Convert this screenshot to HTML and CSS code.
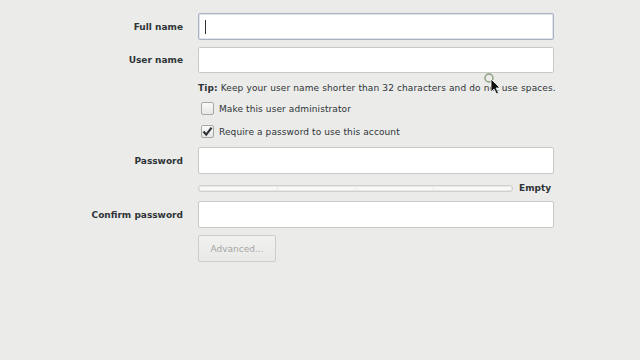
FILE: index.html
```html
<!DOCTYPE html>
<html>
<head>
<meta charset="utf-8">
<link rel="stylesheet" href="styles.css">
</head>
<body>
<div class="form">
  <div class="label r1">Full name</div>
  <div class="entry focused r1"><span class="caret"></span></div>

  <div class="label r2">User name</div>
  <div class="entry r2"></div>

  <div class="tip r3"><b>Tip:</b> Keep your user name shorter than 32 characters and do not use spaces.</div>

  <label class="check r4"><span class="box"></span>Make this user administrator</label>
  <label class="check r5"><span class="box checked"><svg width="11" height="11" viewBox="0 0 11 11"><path d="M1.5 5.5 L4.2 8.6 L9.6 1.6" fill="none" stroke="#2e3436" stroke-width="2.2" stroke-linejoin="miter"/></svg></span>Require a password to use this account</label>

  <div class="label r6">Password</div>
  <div class="entry r6"></div>

  <div class="strength r7">
    <div class="bar"><span></span><span></span><span></span><span></span></div>
    <span class="empty">Empty</span>
  </div>

  <div class="label r8">Confirm password</div>
  <div class="entry r8"></div>

  <div class="r9 btnrow"><button class="btn">Advanced...</button></div>
</div>

<svg class="pointer" width="24" height="24" viewBox="0 0 24 24">
  <circle cx="5" cy="5" r="4" fill="none" stroke="#6f8a5f" stroke-width="1.4" opacity="0.8"/>
  <path d="M7 6 L7 19 L10 16 L12.5 21 L14.5 20 L12 15 L16 15 Z" fill="#111" stroke="#fff" stroke-width="0.8"/>
</svg>
</body>
</html>
```

FILE: styles.css
```css
html, body {
  margin: 0;
  padding: 0;
  background: #ebebea;
  width: 640px;
  height: 360px;
  overflow: hidden;
  font-family: "DejaVu Sans", sans-serif;
  font-size: 9px;
  color: #2e3436;
}

.form {
  display: grid;
  grid-template-columns: 103px 356px;
  column-gap: 15px;
  margin-left: 80px;
  padding-top: 13px;
  align-items: center;
}

.label {
  grid-column: 1;
  text-align: right;
  font-weight: bold;
}

.entry {
  grid-column: 2;
  box-sizing: border-box;
  height: 27px;
  background: #fff;
  border: 1px solid #c9c9c6;
  border-radius: 2px;
  position: relative;
}

.entry.focused {
  border-color: #a9b2bf;
  box-shadow: inset 0 0 0 1px #e2e6ec;
}

.caret {
  position: absolute;
  left: 6px;
  top: 6px;
  width: 1px;
  height: 14px;
  background: #333;
}

.r1 { grid-row: 1; }
.r2 { grid-row: 2; margin-top: 7px; }
.r3 { grid-row: 3; margin-top: 8px; }
.r4 { grid-row: 4; margin-top: 6px; }
.r5 { grid-row: 5; margin-top: 8px; }
.r6 { grid-row: 6; margin-top: 8px; }
.r7 { grid-row: 7; margin-top: 10px; }
.r8 { grid-row: 8; margin-top: 9px; }
.r9 { grid-row: 9; margin-top: 7px; }

.entry.r2 { height: 26px; }

.tip {
  grid-column: 2;
  height: 14px;
  line-height: 14px;
  white-space: nowrap;
  letter-spacing: 0.12px;
}

.check {
  grid-column: 2;
  display: flex;
  align-items: center;
  height: 15px;
  gap: 5px;
  padding-left: 3px;
  letter-spacing: 0.1px;
}

.box {
  box-sizing: border-box;
  width: 13px;
  height: 13px;
  border: 1px solid #a8a8a5;
  border-radius: 2px;
  background: linear-gradient(#fafafa, #e6e6e4);
  display: flex;
  align-items: center;
  justify-content: center;
}

.strength {
  grid-column: 2;
  display: flex;
  align-items: center;
  gap: 6px;
  height: 8px;
}

.bar {
  box-sizing: border-box;
  width: 315px;
  height: 7px;
  border: 1px solid #cfcfcc;
  border-radius: 3px;
  background: #e9e9e8;
  display: flex;
  gap: 1px;
  padding: 1px;
}

.bar span {
  flex: 1;
  background: #f8f8f8;
}

.empty {
  font-weight: bold;
  line-height: 8px;
}

.btnrow {
  grid-column: 2;
}

.btn {
  box-sizing: border-box;
  width: 78px;
  height: 27px;
  font-family: "DejaVu Sans", sans-serif;
  font-size: 9px;
  color: #a6a6a4;
  background: linear-gradient(#f1f1f0, #e9e9e8);
  border: 1px solid #cdcdca;
  border-radius: 2px;
  padding: 0;
}

.pointer {
  position: absolute;
  left: 484px;
  top: 73px;
}
```
